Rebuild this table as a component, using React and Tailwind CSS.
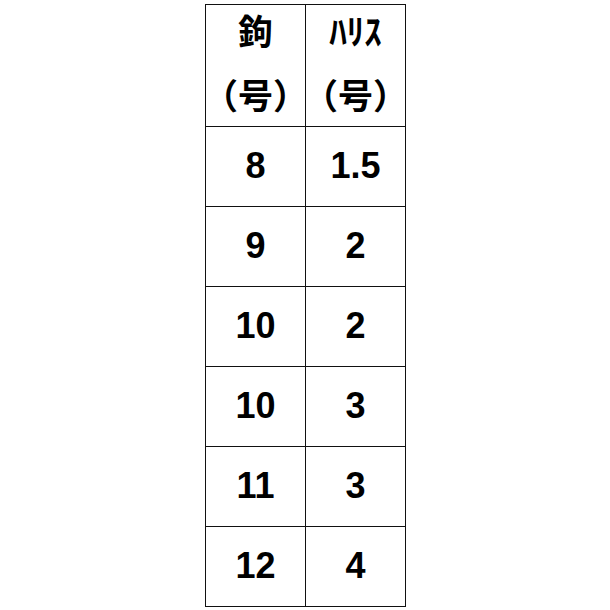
export default function App() {
  const rows = [
    ["8", "1.5"],
    ["9", "2"],
    ["10", "2"],
    ["10", "3"],
    ["11", "3"],
    ["12", "4"],
  ];

  return (
    <div className="w-[610px] h-[610px] bg-white pt-[4px] pl-[205px] font-['Liberation_Sans','Noto_Sans_CJK_JP',sans-serif] text-black">
      <div className="w-[201px] border-l border-t border-[#111]">
        {/* header */}
        <div className="flex">
          <div className="w-[100px] h-[122px] pb-[8px] border-r border-b border-[#111] flex flex-col items-center justify-center font-['Noto_Sans_CJK_JP',sans-serif] font-bold text-[35px] leading-[64px]">
            <div>鉤</div>
            <div className="whitespace-nowrap">（号）</div>
          </div>
          <div className="w-[100px] h-[122px] pb-[8px] border-r border-b border-[#111] flex flex-col items-center justify-center font-['Noto_Sans_CJK_JP',sans-serif] font-bold text-[35px] leading-[64px]">
            <div>ﾊﾘｽ</div>
            <div className="whitespace-nowrap">（号）</div>
          </div>
        </div>

        {rows.map(([hook, line], i) => (
          <div key={i} className="flex">
            <div className="w-[100px] h-[80px] pb-[2px] border-r border-b border-[#111] flex items-center justify-center font-bold text-[36px]">
              {hook}
            </div>
            <div className="w-[100px] h-[80px] pb-[2px] border-r border-b border-[#111] flex items-center justify-center font-bold text-[36px]">
              {line}
            </div>
          </div>
        ))}
      </div>
    </div>
  );
}
